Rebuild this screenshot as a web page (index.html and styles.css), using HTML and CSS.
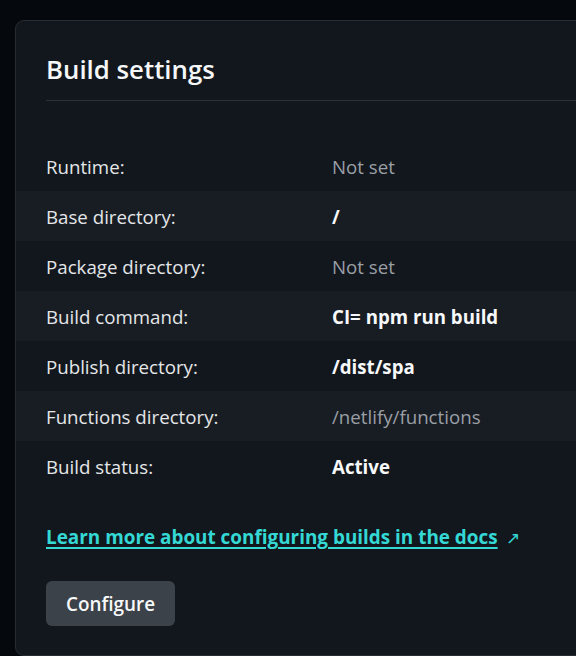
FILE: index.html
```html
<!DOCTYPE html>
<html>
<head>
<meta charset="utf-8">
<link rel="stylesheet" href="styles.css">
</head>
<body>
<section class="card">
  <header class="card-head">
    <h2 class="title">Build settings</h2>
  </header>
  <dl class="settings">
    <div class="row"><dt>Runtime:</dt><dd class="muted">Not set</dd></div>
    <div class="row"><dt>Base directory:</dt><dd class="strong">/</dd></div>
    <div class="row"><dt>Package directory:</dt><dd class="muted">Not set</dd></div>
    <div class="row"><dt>Build command:</dt><dd class="strong">CI= npm run build</dd></div>
    <div class="row"><dt>Publish directory:</dt><dd class="strong">/dist/spa</dd></div>
    <div class="row"><dt>Functions directory:</dt><dd class="muted">/netlify/functions</dd></div>
    <div class="row"><dt>Build status:</dt><dd class="strong">Active</dd></div>
  </dl>
  <p class="docs"><a href="#" class="docs-link">Learn more about configuring builds in the docs</a><span class="arrow">↗</span></p>
  <div class="actions"><button class="btn">Configure</button></div>
</section>
</body>
</html>
```

FILE: styles.css
```css
html, body {
  margin: 0;
  padding: 0;
  background: #05090d;
  overflow: hidden;
  height: 656px;
}
body {
  padding: 20px 0 0 15px;
  font-family: "Open Sans", "Noto Sans", sans-serif;
  color: #e4e6e8;
}
.card {
  width: 640px;
  height: 636px;
  box-sizing: border-box;
  background: #12171e;
  border: 1px solid #272c33;
  border-radius: 9px;
}
.card-head {
  margin: 0 0 0 30px;
  border-bottom: 1px solid #2b3138;
  height: 80px;
  box-sizing: border-box;
}
.title {
  margin: 0;
  padding-top: 31px;
  font-size: 25.8px;
  line-height: 34px;
  font-weight: 600;
  color: #f6f7f8;
}
.settings {
  margin: 40px 0 0 0;
}
.row {
  display: flex;
  align-items: center;
  height: 50px;
  padding-left: 30px;
}
.row:nth-child(even) {
  background: #181d24;
}
dt {
  width: 286px;
  font-size: 18.7px;
}
dd {
  margin: 0;
  font-size: 18.7px;
}
.muted { color: #9a9fa5; }
.strong { color: #f7f8f9; font-weight: 700; }
.docs {
  margin: 33px 0 0 30px;
  font-size: 18.9px;
  line-height: 26px;
}
.docs-link {
  color: #34d8d4;
  font-weight: 700;
  text-decoration: underline;
  text-underline-offset: 3px;
  text-decoration-thickness: 2px;
}
.arrow {
  color: #34d8d4;
  font-size: 17px;
  margin-left: 8px;
}
.actions {
  margin: 30px 0 0 30px;
}
.btn {
  background: #3c4249;
  color: #f7f8f9;
  border: none;
  border-radius: 6px;
  height: 45px;
  padding: 0 20px;
  font-family: inherit;
  font-size: 18.9px;
  font-weight: 600;
}
```
